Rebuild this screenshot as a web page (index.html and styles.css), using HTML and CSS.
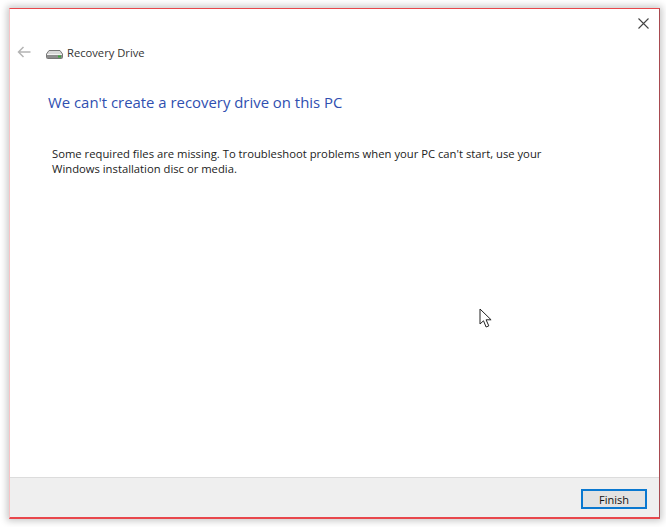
FILE: index.html
```html
<!DOCTYPE html>
<html lang="en">
<head>
<meta charset="utf-8">
<title>Recovery Drive</title>
<link rel="stylesheet" href="styles.css">
</head>
<body>
<div class="window">
  <main class="content">
    <div class="close-row">
      <svg class="close" width="11" height="11" viewBox="0 0 11 11"><path d="M.5.5l10 10M10.500.5l-10 10" stroke="#444" stroke-width="1.1" fill="none"/></svg>
    </div>
    <div class="nav">
      <svg class="back" width="14" height="12" viewBox="0 0 14 12"><path d="M13.500 6H1.500M6.500 1l-5 5 5 5" stroke="#b4b4b4" stroke-width="1.500" fill="none"/></svg>
      <svg class="drive" width="17" height="10" viewBox="0 0 17 10"><path d="M3 1.500h11l2.500 3.500v3.500a1 1 0 0 1-1 1h-14a1 1 0 0 1-1-1V5z" fill="#d8d8d8" stroke="#777" stroke-width="1"/><path d="M1 5.500h15" stroke="#f2f2f2"/><rect x="1" y="6" width="15" height="3" fill="#8c8c8c"/><rect x="12" y="6.500" width="3" height="2" fill="#3da53d"/></svg>
      <span class="nav-title">Recovery Drive</span>
    </div>
    <h1 class="heading">We can't create a recovery drive on this PC</h1>
    <p class="message">Some required files are missing. To troubleshoot problems when your PC can't start, use your<br>Windows installation disc or media.</p>
  </main>
  <footer class="footer">
    <button class="finish" type="button">Finish</button>
  </footer>
  <svg class="cursor" width="14" height="21" viewBox="0 0 14 21"><path d="M1 1v15l3.500-3.200 2.600 6.200 2.700-1.100-2.700-6.100h5z" fill="#fff" stroke="#222" stroke-width="1"/></svg>
</div>
</body>
</html>
```
FILE: styles.css
```css
* { box-sizing: border-box; }
html, body { height: 100%; }
body {
  margin: 0;
  padding: 8px 6px 8px 9px;
  background: #fff;
  overflow: hidden;
  font-family: "Open Sans", "Noto Sans", sans-serif;
}
.window {
  position: relative;
  width: 651px;
  height: 511px;
  display: flex;
  flex-direction: column;
  background: #fff;
  border: 1px solid #e8474c;
  border-left-color: #f6c4c6;
  border-right-color: #a84a50;
  border-bottom-width: 2px;
  box-shadow: 0 0 7px 2px rgba(0,0,0,.22);
}
.content { flex: 1; padding: 0 0 0 7px; }
.close-row { display: flex; justify-content: flex-end; padding: 9px 10px 0 0; height: 22px; }
.close { display: block; }
.nav { display: flex; align-items: center; margin-top: 13px; height: 16px; }
.back { margin-right: 15px; }
.drive { margin-top: 4px; margin-right: 4px; }
.nav-title { font-size: 11.2px; color: #333; }
.heading {
  margin: 32px 0 0 31px;
  font-size: 14.9px;
  font-weight: 400;
  line-height: 20px;
  color: #2f4fb0;
}
.message {
  margin: 34px 0 0 35px;
  font-size: 11.26px;
  line-height: 15px;
  color: #222;
}
.footer {
  height: 40px;
  display: flex;
  justify-content: flex-end;
  align-items: flex-start;
  padding: 11px 12px 0 0;
  background: #efefef;
  border-top: 1px solid #dcdcdc;
}
.finish {
  width: 66px;
  height: 20px;
  padding: 0;
  background: #e2e2e2;
  border: 2px solid #0a78d0;
  font-family: inherit;
  font-size: 11px;
  color: #111;
}
.cursor { position: absolute; left: 469px; top: 299px; }
```
